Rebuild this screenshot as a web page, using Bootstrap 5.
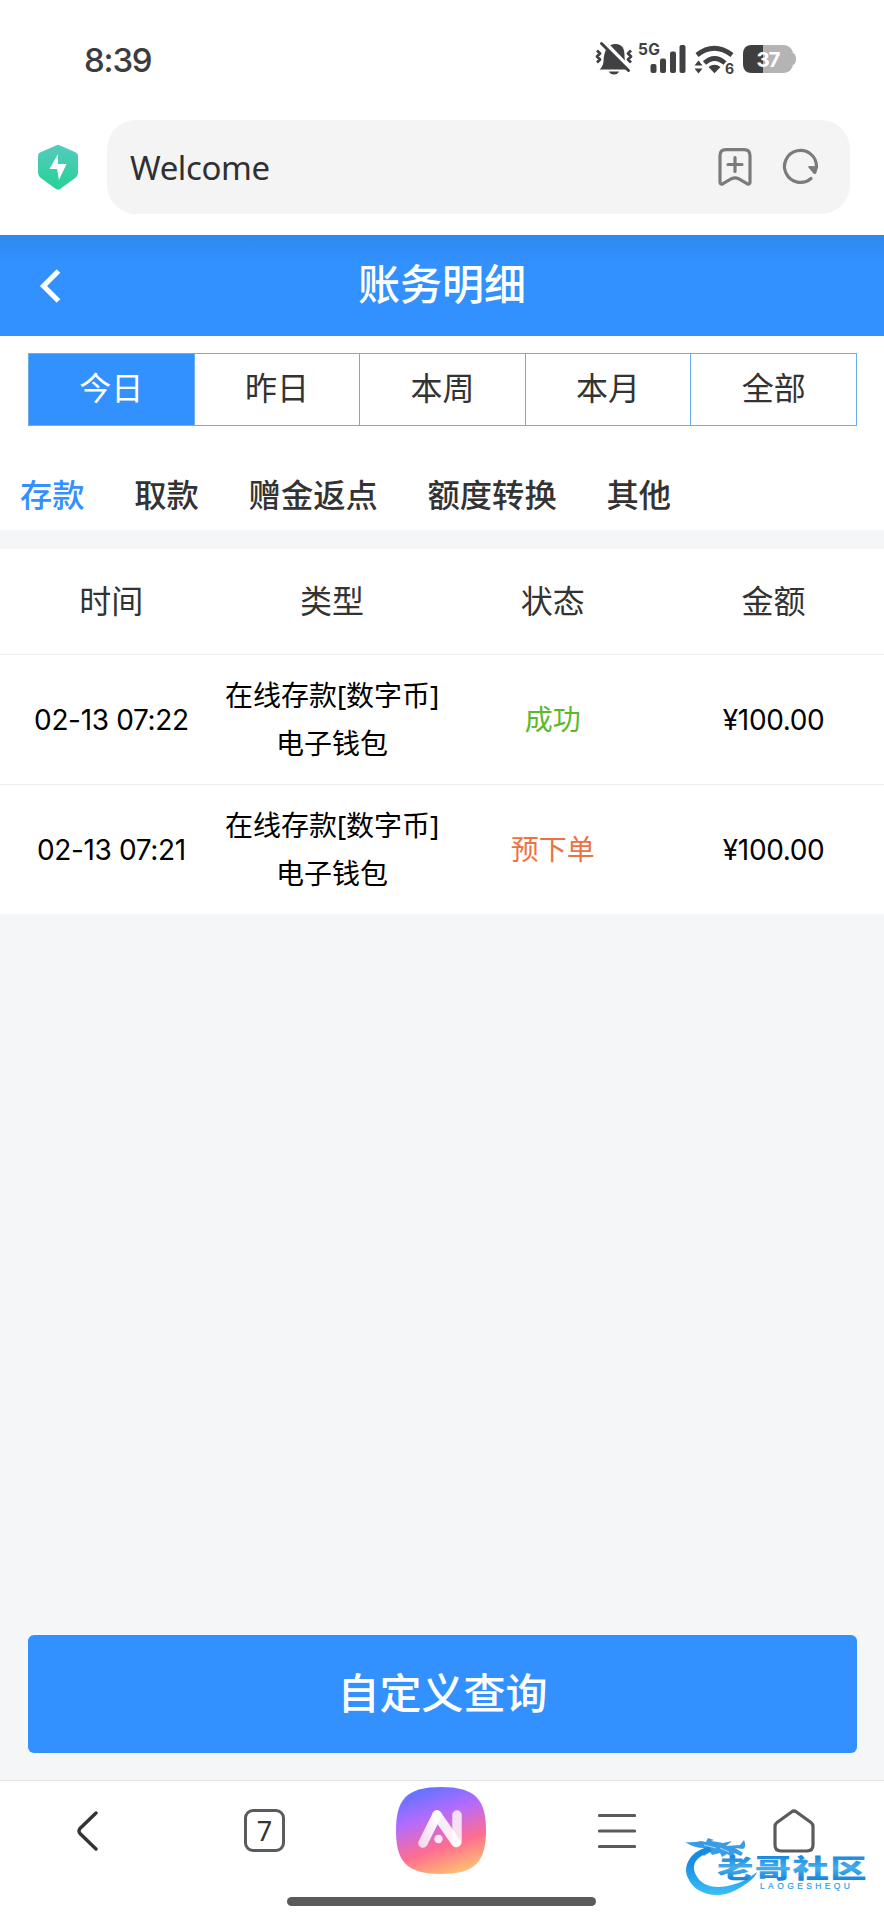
<!DOCTYPE html>
<html lang="zh-CN">
<head>
<meta charset="utf-8">
<meta name="viewport" content="width=device-width, initial-scale=1">
<title>账务明细</title>
<link href="https://cdn.jsdelivr.net/npm/bootstrap@5.3.0/dist/css/bootstrap.min.css" rel="stylesheet">
<style>
  body { font-family: "Noto Sans", "Noto Sans CJK SC", sans-serif; background: #f4f6f8; color: #333; }
  .screen { height: 1920px; overflow: hidden; }
  svg { display: block; flex: none; }
  .status { height: 120px; padding: 0 88px 0 84px; }
  .clock { font: 500 33px/118px Inter, sans-serif; letter-spacing: -1.2px; color: #3c3c3e; }
  .addressbar { height: 115px; padding: 0 34px 21px 38px; }
  .address { height: 94px; border-radius: 29px; background: #f4f4f4; padding: 0 28px 0 23px; margin-left: 29px; }
  .address span { font-size: 33px; letter-spacing: -.4px; color: #303032; padding-top: 2px; }
  .titlebar { height: 101px; background: linear-gradient(#2f89ee, #3291ff 28px); color: #fff; }
  .titlebar h1 { font-size: 42px; font-weight: 500; line-height: 1; padding-bottom: 3px; }
  .title-back { left: 38px; top: 33px; }
  .periods { margin: 17px 27px 0 28px; height: 73px; border: 1px solid #6eaee8; }
  .periods .nav-link { border-radius: 0; color: #333; font-size: 32px; padding: 0 0 3px; border-left: 1px solid #6eaee8; }
  .periods .nav-item:first-child .nav-link { border-left: 0; }
  .periods .nav-link.active { background: #3291ff; color: #fff; }
  .kinds { height: 104px; padding: 33px 20px 0; gap: 49.7px; font-size: 32.3px; font-weight: 500; }
  .kinds .on { color: #3291ff; }
  .gapstrip { height: 19px; }
  .ledger { color: #000; }
  .ledger .heads { height: 105px; font-size: 32px; color: #333; padding: 0 0 2px 1px; }
  .ledger .entry { height: 130px; font-size: 28px; line-height: 48px; border-top: 1px solid #ececee; padding: 0 0 2px 1px; }
  .ledger .figures { font-family: Inter, sans-serif; font-size: 28px; letter-spacing: -.35px; padding-top: 2px; }
  .ok { color: #5cb82c; }
  .pending { color: #ee7144; }
  .query { height: 118px; border-radius: 6px; background: #3291ff; color: #fff; font-size: 42px; font-weight: 500; margin: 0 27px 27px 28px; }
  .query span { display: block; padding-bottom: 4px; }
  .tools { height: 140px; border-top: 1px solid #e2e4e6; }
  .tools > .row { height: 99px; padding-right: 2px; }
  .tabcount { width: 41px; height: 43px; border: 3px solid #5b5b5c; border-radius: 9px; font: 400 27px/1 "Noto Sans", sans-serif; color: #333; }
  .homebar { width: 309px; height: 9px; border-radius: 5px; background: #5a5a5a; margin: 17px 0 0 287px; }
  .watermark { left: 680px; top: 1832px; }
</style>
<script src="https://cdn.jsdelivr.net/npm/bootstrap@5.3.0/dist/js/bootstrap.bundle.min.js"></script>
</head>
<body>
<div class="screen position-relative d-flex flex-column">
  <header class="bg-white">
    <div class="status d-flex align-items-center justify-content-between">
      <div class="clock">8:39</div>
      <svg width="204" height="38" viewBox="592 41 204 38" fill="#414143">
        <!-- muted bell -->
        <path d="M599.500 69.500q3.500-3 4-8c.500-11 4-17 11-17.500 8-.500 10 5 10 11 0 6 1 11 5 14.500z"/>
        <path d="M609 71.500h10q-1 3-5 3t-5-3z"/>
        <path d="M603 41l29 30" stroke="#fff" stroke-width="4.500"/>
        <path d="M601.500 43.500l27 27" stroke="#414143" stroke-width="3" stroke-linecap="round"/>
        <path d="M597 50.500l3 3-3 3 3 3-3 3M631 50.500l-3 3 3 3-3 3 3 3" fill="none" stroke="#414143" stroke-width="2.800" stroke-linejoin="round"/>
        <text x="638" y="54.500" font-family="Inter" font-weight="700" font-size="15.500" textLength="22">5G</text>
        <rect x="650.500" y="64" width="6" height="9" rx="2"/><rect x="660" y="58.500" width="6" height="14.500" rx="2"/><rect x="670" y="51.500" width="6" height="21.500" rx="2"/><rect x="679.500" y="45" width="6" height="28" rx="2"/>
        <g fill="none" stroke="#414143" stroke-width="4.800">
          <path d="M697 55q17-13.500 35 0"/><path d="M704.500 63q10-9 20.500 0"/>
        </g>
        <path d="M708.500 67q6-4.500 12 0l-6 6.300z"/>
        <path d="M694.500 65.500l4-5 4 5zm0 3l4 5 4-5z"/>
        <text x="725" y="73.500" font-family="Inter" font-weight="700" font-size="14">6</text>
        <rect x="743" y="45" width="50" height="28" rx="9" fill="#b4b4b4"/>
        <path d="M793 53q3 1 3 6t-3 6z" fill="#b4b4b4"/>
        <path d="M763 45h-11q-9 0-9 9v10q0 9 9 9h11z" fill="#3f3f41"/>
        <text x="756.500" y="66.500" font-family="Inter" font-weight="700" font-size="20.500" fill="#fff" textLength="24">37</text>
      </svg>
    </div>
    <div class="addressbar d-flex align-items-center">
      <svg width="40" height="46" viewBox="0 0 40 46">
        <defs><linearGradient id="shield" x2="0" y2="1"><stop stop-color="#55cbbd"/><stop offset="1" stop-color="#25d296"/></linearGradient></defs>
        <path d="M18.500 1.200q1.500-.8 3 0l16 7q2.500 1 2.500 3.500V28q0 4-3.500 6.500L22 45q-2 1-4 0L3.500 34.500Q0 32 0 28V11.700Q0 9 2.500 8.200z" fill="url(#shield)"/>
        <path d="M20 10L11.500 25h7.500l2 11 7.500-16h-8.500z" fill="#fff"/>
      </svg>
      <div class="address d-flex align-items-center flex-grow-1">
        <span class="flex-grow-1">Welcome</span>
        <svg width="34" height="38" viewBox="0 0 34 38" fill="none" stroke="#7b7b7b" stroke-width="3.200" stroke-linecap="round" stroke-linejoin="round">
          <path d="M8 1.700h18q6 0 6 6V34q0 3-3 1.700l-8.500-5Q17 29 13.500 30.700L5 35.700Q2 37 2 34V7.700q0-6 6-6zM17 9.500v14M10 16.500h14"/>
        </svg>
        <svg class="ms-4" width="46" height="40" viewBox="-4 0 46 40">
          <path d="M31 31.500A16 16 0 1 1 36.500 20" fill="none" stroke="#7b7b7b" stroke-width="3.200" stroke-linecap="round"/>
          <path d="M30.500 19q-3.500-.5-2 1.500l5 6q2 1.500 3-1l1.700-6z" fill="#7b7b7b"/>
        </svg>
      </div>
    </div>
  </header>

  <div class="titlebar position-relative d-flex align-items-center justify-content-center flex-shrink-0">
    <svg class="title-back position-absolute" width="24" height="36" viewBox="0 0 24 36"><path d="M20.500 3L5.500 18l15 15" fill="none" stroke="#fff" stroke-width="5"/></svg>
    <h1 class="m-0">账务明细</h1>
  </div>

  <section class="bg-white flex-shrink-0">
    <div class="d-flex flex-column">
      <ul class="periods nav nav-pills nav-fill flex-nowrap">
        <li class="nav-item d-flex"><a class="nav-link active w-100 d-flex align-items-center justify-content-center">今日</a></li>
        <li class="nav-item d-flex"><a class="nav-link w-100 d-flex align-items-center justify-content-center">昨日</a></li>
        <li class="nav-item d-flex"><a class="nav-link w-100 d-flex align-items-center justify-content-center">本周</a></li>
        <li class="nav-item d-flex"><a class="nav-link w-100 d-flex align-items-center justify-content-center">本月</a></li>
        <li class="nav-item d-flex"><a class="nav-link w-100 d-flex align-items-center justify-content-center">全部</a></li>
      </ul>
      <div class="kinds d-flex align-items-center">
        <span class="on">存款</span><span>取款</span><span>赠金返点</span><span>额度转换</span><span>其他</span>
      </div>
    </div>
  </section>
  <div class="gapstrip flex-shrink-0"></div>

  <section class="ledger bg-white text-center flex-shrink-0">
    <div class="heads row g-0 align-items-center">
      <div class="col-3">时间</div><div class="col-3">类型</div><div class="col-3">状态</div><div class="col-3">金额</div>
    </div>
    <div class="entry row g-0 align-items-center">
      <div class="col-3 figures">02-13 07:22</div><div class="col-3">在线存款[数字币]<br>电子钱包</div><div class="col-3 ok">成功</div><div class="col-3 figures">¥100.00</div>
    </div>
    <div class="entry row g-0 align-items-center">
      <div class="col-3 figures">02-13 07:21</div><div class="col-3">在线存款[数字币]<br>电子钱包</div><div class="col-3 pending">预下单</div><div class="col-3 figures">¥100.00</div>
    </div>
  </section>

  <button class="query btn mt-auto p-0 flex-shrink-0"><span>自定义查询</span></button>

  <footer class="tools bg-white flex-shrink-0">
    <div class="row row-cols-5 g-0 align-items-center justify-content-center">
      <div class="col d-flex justify-content-center"><svg width="24" height="42" viewBox="0 0 24 42"><path d="M20 3L4 18.500q-2 2.500 0 5L20 39" fill="none" stroke="#333" stroke-width="3.400" stroke-linecap="round"/></svg></div>
      <div class="col d-flex justify-content-center"><div class="tabcount d-flex align-items-center justify-content-center">7</div></div>
      <div class="col d-flex justify-content-center">
        <svg width="90" height="87" viewBox="0 0 90 87">
          <defs>
            <linearGradient id="aibg" x1=".25" y1="0" x2=".6" y2="1"><stop stop-color="#5b74ff"/><stop offset=".34" stop-color="#b36bff"/><stop offset=".7" stop-color="#ff6d91"/><stop offset="1" stop-color="#ffba73"/></linearGradient>
            <linearGradient id="leg" x1="1" y1="0" x2="0" y2="1"><stop stop-color="#fff"/><stop offset="1" stop-color="#fff" stop-opacity=".75"/></linearGradient>
          </defs>
          <path d="M45 0C80 0 90 13 90 43.500S80 87 45 87 0 74 0 43.500 10 0 45 0z" fill="url(#aibg)"/>
          <g fill="none" stroke-width="9.500" stroke-linecap="round">
            <path d="M27 56L41 28" stroke="url(#leg)"/><path d="M61 28v27" stroke="#fff" stroke-opacity=".78"/><path d="M41 28l19 27.500" stroke="#fff" stroke-opacity=".88"/>
          </g>
          <circle cx="42.500" cy="52" r="4.200" fill="#ffe6f2"/>
        </svg>
      </div>
      <div class="col d-flex justify-content-center"><svg width="38" height="36" viewBox="0 0 38 36"><path d="M1.500 2.500h35M1.500 18h35M1.500 33.500h35" stroke="#5b5b5c" stroke-width="3.200" stroke-linecap="round"/></svg></div>
      <div class="col d-flex justify-content-center"><svg width="42" height="44" viewBox="0 0 42 44"><path d="M18.500 3q2.500-2 5 0L38 13.500q2 1.500 2 4V36q0 6-6 6H8q-6 0-6-6V17.500q0-2.500 2-4z" fill="none" stroke="#5b5b5c" stroke-width="3.200"/></svg></div>
    </div>
    <div class="homebar"></div>
  </footer>

  <svg class="watermark position-absolute" width="200" height="68" viewBox="680 1832 200 68">
    <defs><linearGradient id="wm" gradientUnits="userSpaceOnUse" x1="0" y1="1840" x2="0" y2="1895"><stop stop-color="#1687df"/><stop offset=".45" stop-color="#178fe8"/><stop offset="1" stop-color="#3cc0f5"/></linearGradient>
    <linearGradient id="wt" x2="0" y2="1"><stop offset=".2" stop-color="#1384dc"/><stop offset=".55" stop-color="#45aeeb"/><stop offset=".85" stop-color="#1787df"/></linearGradient></defs>
    <!-- dragon head and curled body -->
    <g fill="url(#wm)">
      <path d="M709 1847C691 1850 682 1866 688 1878c7 17 30 21 46 13 12-6 22-14 23-19-9 7-15 10-22 12-18 6-33 3-39-9-5-10-1-18 16-24z"/>
      <path d="M684 1842q10 1 17-1l5 1 2-4 6 2-3 1q7 1 12 2l9-2-6 5 14-1 4-5q3 7-1 9l-8-1 8 5-2 3-7-3 1 5-8-4-5 3-2-4-8 2-2-3-6 4-3-3 3-5q-10 0-19-6z" opacity=".85"/>
    </g>
    <path d="M704 1845l12 3M720 1848l9 4" stroke="#fff" stroke-width="1" opacity=".6"/>
    <g transform="translate(717 1877.500) scale(1.400 1)"><text font-family="'Noto Sans CJK SC'" font-weight="900" font-size="26" textLength="107" fill="url(#wt)">老哥社区</text></g>
    <text x="760" y="1888.500" font-family="Liberation Sans" font-size="8.500" textLength="90" fill="#2a9fe5" stroke="#2a9fe5" stroke-width=".2">LAOGESHEQU</text>
  </svg>
</div>
</body>
</html>
